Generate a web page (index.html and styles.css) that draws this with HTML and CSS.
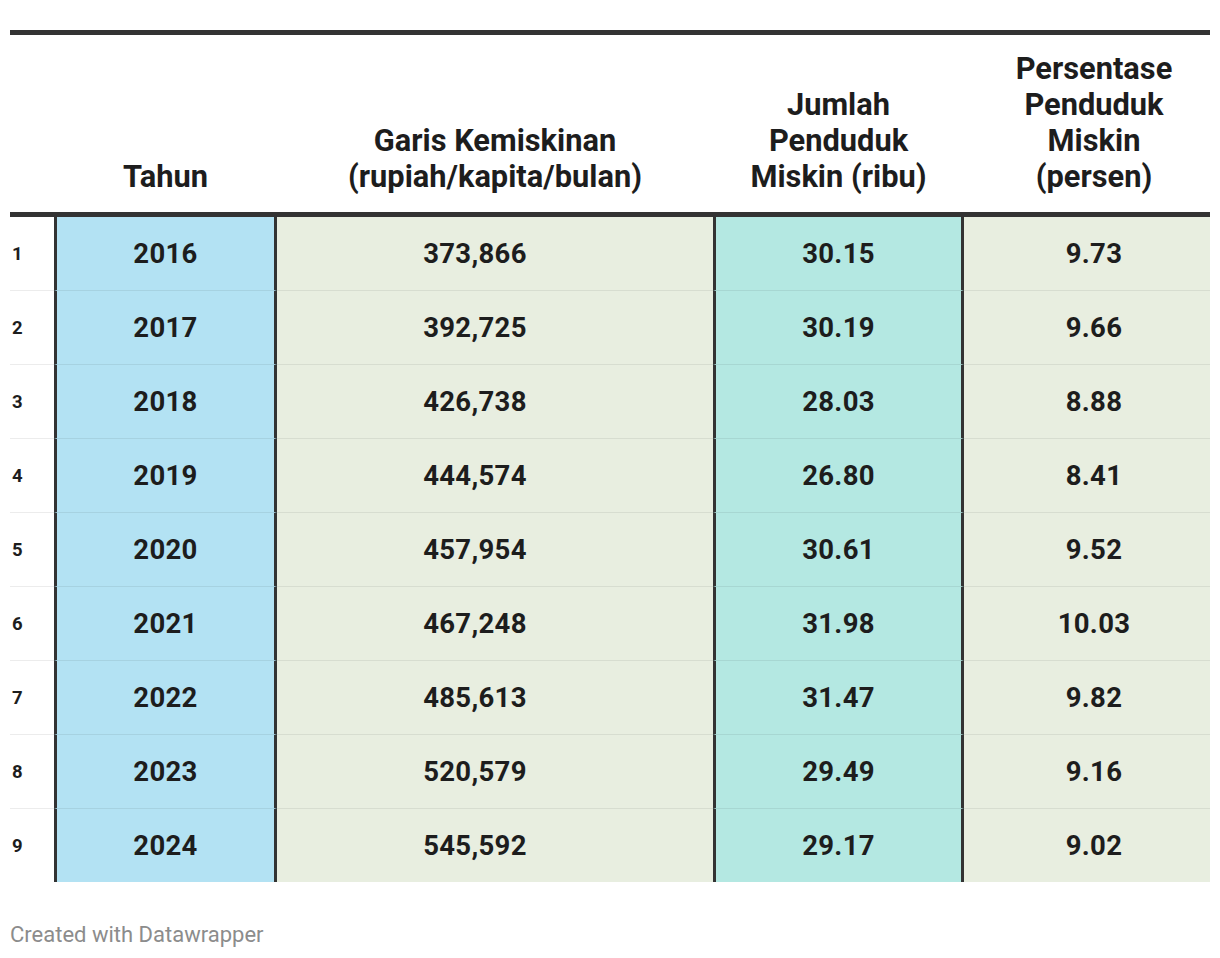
FILE: index.html
```html
<!DOCTYPE html>
<html lang="id">
<head>
<meta charset="utf-8">
<title>Garis Kemiskinan</title>
<link rel="stylesheet" href="styles.css">
</head>
<body>
<div class="chart">
  <div class="table">
    <div class="row head">
      <div class="cell idx"></div>
      <div class="cell">Tahun</div>
      <div class="cell">Garis Kemiskinan<br>(rupiah/kapita/bulan)</div>
      <div class="cell">Jumlah<br>Penduduk<br>Miskin (ribu)</div>
      <div class="cell hpc">Persentase<br>Penduduk<br>Miskin<br>(persen)</div>
    </div>
    <div class="row"><div class="cell idx">1</div><div class="cell year">2016</div><div class="cell gk">373,866</div><div class="cell jm">30.15</div><div class="cell pc">9.73</div></div>
    <div class="row"><div class="cell idx">2</div><div class="cell year">2017</div><div class="cell gk">392,725</div><div class="cell jm">30.19</div><div class="cell pc">9.66</div></div>
    <div class="row"><div class="cell idx">3</div><div class="cell year">2018</div><div class="cell gk">426,738</div><div class="cell jm">28.03</div><div class="cell pc">8.88</div></div>
    <div class="row"><div class="cell idx">4</div><div class="cell year">2019</div><div class="cell gk">444,574</div><div class="cell jm">26.80</div><div class="cell pc">8.41</div></div>
    <div class="row"><div class="cell idx">5</div><div class="cell year">2020</div><div class="cell gk">457,954</div><div class="cell jm">30.61</div><div class="cell pc">9.52</div></div>
    <div class="row"><div class="cell idx">6</div><div class="cell year">2021</div><div class="cell gk">467,248</div><div class="cell jm">31.98</div><div class="cell pc">10.03</div></div>
    <div class="row"><div class="cell idx">7</div><div class="cell year">2022</div><div class="cell gk">485,613</div><div class="cell jm">31.47</div><div class="cell pc">9.82</div></div>
    <div class="row"><div class="cell idx">8</div><div class="cell year">2023</div><div class="cell gk">520,579</div><div class="cell jm">29.49</div><div class="cell pc">9.16</div></div>
    <div class="row"><div class="cell idx">9</div><div class="cell year">2024</div><div class="cell gk">545,592</div><div class="cell jm">29.17</div><div class="cell pc">9.02</div></div>
  </div>
  <div class="footer">Created with Datawrapper</div>
</div>
</body>
</html>
```

FILE: styles.css
```css
html, body {
  margin: 0;
  padding: 0;
  background: #ffffff;
}

body {
  font-family: Roboto, "Liberation Sans", Arial, sans-serif;
  color: #1d1d1d;
}

.chart {
  padding: 30px 10px 0 10px;
  width: 1200px;
}

.table {
  border-top: 5px solid #333333;
}

.row {
  display: grid;
  grid-template-columns: 44px 223px 436px 251px 246px;
  height: 74px;
}

.row.head {
  height: auto;
  border-bottom: 5px solid #333333;
}

.cell {
  display: flex;
  align-items: center;
  justify-content: center;
  font-weight: 700;
  font-size: 27.5px;
  letter-spacing: 0.3px;
  text-align: center;
  box-sizing: border-box;
  border-top: 1px solid rgba(0, 0, 0, 0.07);
}

.row.head .cell {
  align-items: flex-end;
  font-size: 30.8px;
  letter-spacing: 0;
  line-height: 36px;
  padding-top: 16px;
  padding-bottom: 17px;
  border-top: none;
}

.row.head .cell.hpc {
  padding-left: 14px;
}

.row.head + .row .cell {
  border-top: none;
}

.row.head + .row {
  height: 73px;
}

.cell.idx {
  justify-content: flex-start;
  padding-left: 2px;
  font-size: 18.5px;
  letter-spacing: 0;
  border-top-color: #ececec;
}

.cell.year {
  background: #b3e2f3;
  border-left: 3px solid #333333;
  border-right: 3px solid #333333;
}

.cell.gk,
.cell.pc {
  background: #e8eee0;
}

.cell.gk {
  padding-right: 40px;
}

.cell.pc {
  padding-left: 14px;
}

.cell.jm {
  background: #b4e8e2;
  border-left: 3px solid #333333;
  border-right: 3px solid #333333;
}

.row .cell.year,
.row .cell.jm {
  border-top: 1px solid rgba(0, 0, 0, 0.07);
}

.row.head + .row .cell.year,
.row.head + .row .cell.jm {
  border-top: none;
}

.footer {
  margin-top: 41px;
  font-size: 22px;
  line-height: 24px;
  color: #8c8c8c;
  font-weight: 400;
}
```
